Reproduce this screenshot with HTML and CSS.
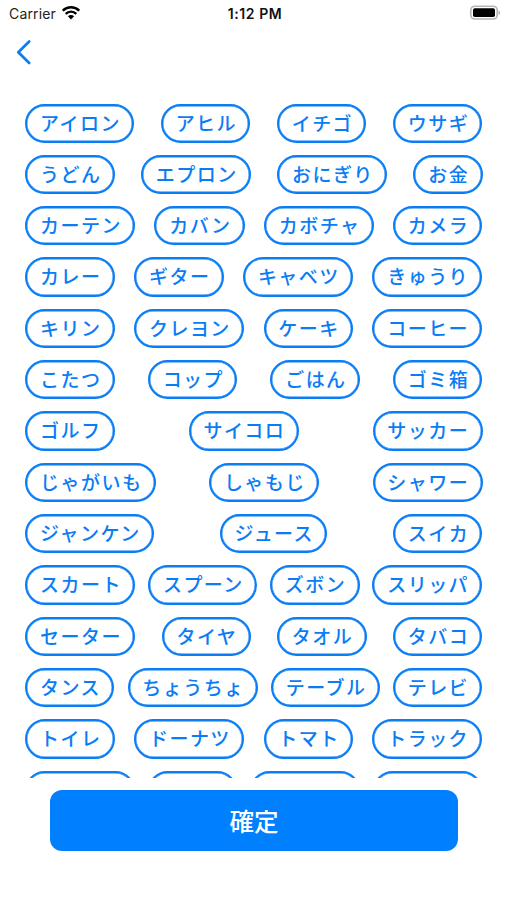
FILE: index.html
```html
<!DOCTYPE html>
<html lang="ja">
<head>
<meta charset="utf-8">
<title>確定</title>
<link rel="stylesheet" href="styles.css">
</head>
<body>
<header class="status">
  <div class="carrier"><span>Carrier</span>
    <svg class="wifi" viewBox="0 0 18 14" width="18" height="14"><path d="M.8 4.7a11.6 11.6 0 0 1 16.4 0M3.7 7.8a7.5 7.5 0 0 1 10.6 0" fill="none" stroke="#000" stroke-width="2.4"/><path d="M5.9 10.3a4.4 4.4 0 0 1 6.2 0L9 13.5Z"/></svg>
  </div>
  <div class="time">1:12 PM</div>
  <svg class="battery" viewBox="0 0 32 16" width="32" height="16"><rect x="1.8" y="1.2" width="26.4" height="12.8" rx="4" fill="#fff" stroke="#b5b5b5" stroke-width="1.6"/><rect x="4" y="3.2" width="22" height="8.8" rx="1.8"/><path d="M29.6 5.3q3 2.4 0 4.8Z" fill="#aaa"/></svg>
</header>
<nav class="nav">
  <svg viewBox="0 0 16 26" width="16" height="26"><path d="M13.2 2.5 2.3 13.2 13.2 24" fill="none" stroke="#0a7df5" stroke-width="2.7" stroke-linecap="round" stroke-linejoin="round"/></svg>
</nav>
<main class="list">
  <div class="row"><span class="pill">アイロン</span><span class="pill">アヒル</span><span class="pill">イチゴ</span><span class="pill">ウサギ</span></div>
  <div class="row"><span class="pill">うどん</span><span class="pill">エプロン</span><span class="pill">おにぎり</span><span class="pill">お金</span></div>
  <div class="row"><span class="pill">カーテン</span><span class="pill">カバン</span><span class="pill">カボチャ</span><span class="pill">カメラ</span></div>
  <div class="row"><span class="pill">カレー</span><span class="pill">ギター</span><span class="pill">キャベツ</span><span class="pill">きゅうり</span></div>
  <div class="row"><span class="pill">キリン</span><span class="pill">クレヨン</span><span class="pill">ケーキ</span><span class="pill">コーヒー</span></div>
  <div class="row"><span class="pill">こたつ</span><span class="pill">コップ</span><span class="pill">ごはん</span><span class="pill">ゴミ箱</span></div>
  <div class="row"><span class="pill">ゴルフ</span><span class="pill">サイコロ</span><span class="pill">サッカー</span></div>
  <div class="row"><span class="pill">じゃがいも</span><span class="pill">しゃもじ</span><span class="pill">シャワー</span></div>
  <div class="row"><span class="pill">ジャンケン</span><span class="pill">ジュース</span><span class="pill">スイカ</span></div>
  <div class="row"><span class="pill">スカート</span><span class="pill">スプーン</span><span class="pill">ズボン</span><span class="pill">スリッパ</span></div>
  <div class="row"><span class="pill">セーター</span><span class="pill">タイヤ</span><span class="pill">タオル</span><span class="pill">タバコ</span></div>
  <div class="row"><span class="pill">タンス</span><span class="pill">ちょうちょ</span><span class="pill">テーブル</span><span class="pill">テレビ</span></div>
  <div class="row"><span class="pill">トイレ</span><span class="pill">ドーナツ</span><span class="pill">トマト</span><span class="pill">トラック</span></div>
  <div class="row"><span class="pill wide"></span><span class="pill medium"></span><span class="pill wide"></span><span class="pill wide"></span></div>
</main>
<button class="confirm">確定</button>
</body>
</html>
```

FILE: styles.css
```css
* { box-sizing: border-box; }
body {
  margin: 0;
  height: 900px;
  overflow: hidden;
  background: #fff;
  font-family: "Noto Sans CJK JP", sans-serif;
}
svg { display: block; }
.status {
  display: grid;
  grid-template-columns: 1fr auto 1fr;
  align-items: center;
  height: 28px;
  padding: 0 6px 2px 9px;
  font-family: Inter, sans-serif;
  font-size: 14px;
  color: #222;
}
.carrier { display: flex; align-items: center; gap: 6px; }
.carrier span { letter-spacing: 0.15px; }
.time { font-weight: 600; letter-spacing: 0.6px; color: #111; }
.battery { justify-self: end; }
.nav { height: 75.5px; padding: 11px 0 0 16px; }
.list {
  display: flex;
  flex-direction: column;
  gap: 12px;
  height: 674.5px;
  padding: 0 24.5px 0 25.3px;
  overflow: hidden;
}
.row {
  display: flex;
  flex: none;
  justify-content: space-between;
  height: 39.33px;
}
.pill {
  height: 39.33px;
  border: 2px solid #0a7df5;
  border-radius: 20px;
  box-shadow: inset 0 0 0 0.4px #0a7df5;
  font-size: 19px;
  font-weight: 500;
  line-height: 33.6px;
  letter-spacing: 1.45px;
  white-space: nowrap;
  color: #0a7df5;
}
.pill:not(:empty) { padding: 0 11.4px 0 12.8px; }
.wide { width: 109.8px; }
.medium { width: 89.3px; }
.confirm {
  display: block;
  width: 408px;
  height: 61px;
  margin: 12.3px 0 0 50px;
  padding: 0;
  border: 0;
  border-radius: 12px;
  background: #007fff;
  color: #fff;
  font: 500 24.5px/59px "Noto Sans CJK JP", sans-serif;
}
```
